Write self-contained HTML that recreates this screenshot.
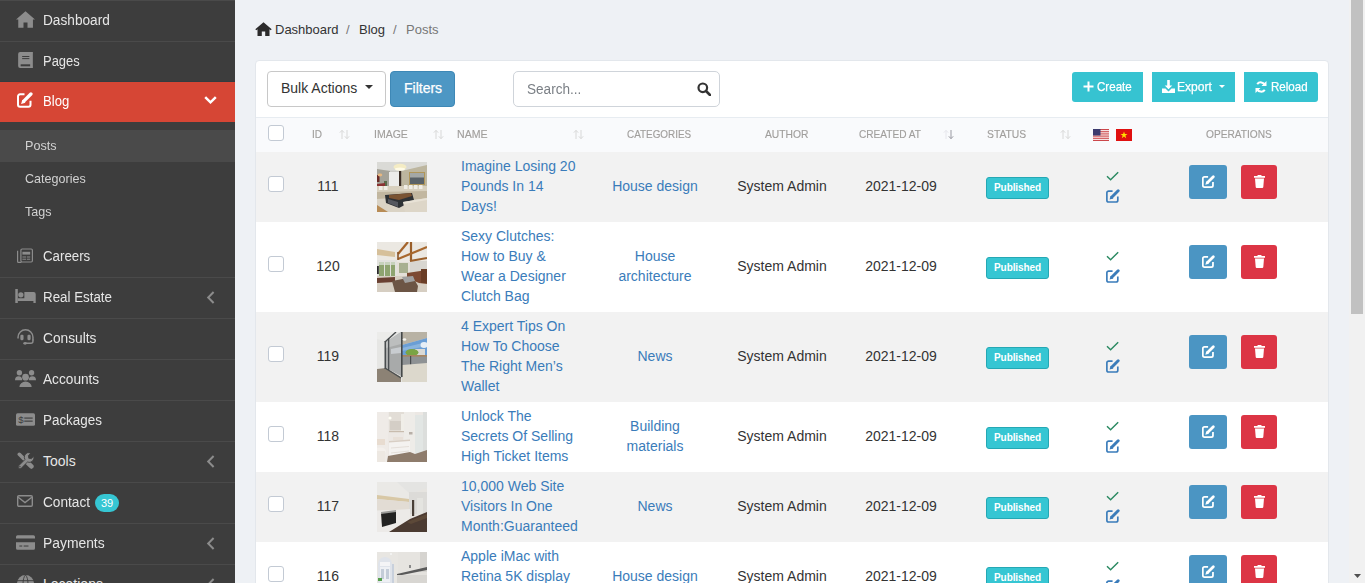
<!DOCTYPE html>
<html><head><meta charset="utf-8">
<style>
*{box-sizing:border-box;margin:0;padding:0}
html,body{width:1365px;height:583px;overflow:hidden}
body{font-family:"Liberation Sans",sans-serif;background:#eef1f5;position:relative;color:#333}
#sb{position:absolute;left:0;top:0;width:235px;height:583px;background:#3d3d3d;overflow:hidden}
.mi{position:absolute;left:0;width:235px;height:41px;border-top:1px solid #4a4a4a;color:#e6e6e6;font-size:14px}
.mi .t{position:absolute;left:43px;top:11px;line-height:16px;transform-origin:0 0;white-space:nowrap}
.mi.act{background:#d64635;border-top:1px solid #343c40;height:41px;color:#fff}
.mi.nb{border-top-color:transparent}
.mi.act .t{top:11px}
.bdg{position:absolute;left:95px;top:11px;width:24px;height:18px;border-radius:9px;background:#36c6d3;color:#fff;font-size:11px;line-height:18px;text-align:center}
.sub{position:absolute;left:0;top:122px;width:235px;height:114px;background:#3d3d3d}
.si{position:absolute;left:0;width:235px;height:32px;font-size:13px;color:#d2d2d2}
.si .t{position:absolute;left:25px;top:8px;line-height:15px;transform-origin:0 0;white-space:nowrap}
.si.on{background:#4a4a4a}
#sc{position:absolute;left:1349px;top:0;width:16px;height:583px;background:#f1f1f1}
#th{position:absolute;left:2px;top:0;width:12px;height:314px;background:#c1c1c1}
#bc{position:absolute;left:255px;top:22px;width:200px;height:15px;font-size:13px;line-height:15px}
#bc span{white-space:nowrap}
#card{position:absolute;left:255px;top:60px;width:1074px;height:540px;background:#fff;border-radius:4px;border:1px solid #e3e7ec}
.bulk{position:absolute;left:267px;top:71px;width:119px;height:36px;border:1px solid #c8c8c8;border-radius:4px;background:#fff;font-size:14px;line-height:16px;padding:8px 0 0 13px;color:#333}
.caret{position:absolute;left:97px;top:13px;width:0;height:0;border-left:4px solid transparent;border-right:4px solid transparent;border-top:4.5px solid #333}
.filt{position:absolute;left:390px;top:71px;width:65px;height:36px;border-radius:4px;background:#4d97c4;border:1px solid #3e88b6;color:#fff;font-size:14px;line-height:16px;padding:8px 0 0 13px;-webkit-text-stroke:0.25px #fff}
.srch{position:absolute;left:513px;top:71px;width:207px;height:36px;border:1px solid #cfd4da;border-radius:5px;background:#fff}
.srch .ph{position:absolute;left:13px;top:9px;font-size:14px;line-height:16px;color:#7a7f85}
.tbtn{position:absolute;top:72px;height:30px;background:#36c3d1;color:#fff;font-size:13px;line-height:15px}
#thead{position:absolute;left:256px;top:117px;width:1072px;height:35px;background:#f9fafc;border-top:1px solid #e7ecf1}
.hd{position:absolute;top:128px;font-size:11px;line-height:13px;color:#a09e9c;white-space:nowrap;transform-origin:0 0;-webkit-text-stroke:0.15px #a09e9c}
.cb{position:absolute;width:16px;height:16px;border:1px solid #c3cad4;border-radius:3px;background:#fff}
.row{position:absolute;left:256px;width:1072px}
.td{position:absolute;font-size:14px;line-height:20px;white-space:nowrap}
.nm{color:#3a7cba}
.badge{position:absolute;left:986px;width:63px;height:22px;background:#36c6d3;border:1px solid #25a8b4;border-radius:3px;color:#fff;font-size:10px;font-weight:bold;line-height:20px;text-align:center;letter-spacing:-0.1px}
.ebtn{position:absolute;left:1189px;width:38px;height:34px;border-radius:3px;background:#4b95c3}
.dbtn{position:absolute;left:1241px;width:36px;height:34px;border-radius:3px;background:#dc3545}
.img{position:absolute;left:377px;width:50px;height:50px;overflow:hidden}
.bt{position:absolute;top:7px;transform-origin:0 0;-webkit-text-stroke:0.25px #fff;white-space:nowrap}

.ph1{background:linear-gradient(#ccc8bf 0,#ccc8bf 40%,#bdb3a0 60%,#7a6a55 70%,#dcd6cc 85%)}
.ph2{background:linear-gradient(#d8cbb5 0,#b0a080 40%,#8a6a50 70%,#c8bca8 100%)}
.ph3{background:linear-gradient(90deg,#6a6a6a 0,#7a7a78 50%,#6a9ac8 60%,#b8c4c8 100%)}
.ph4{background:linear-gradient(#e8e2da 0,#ece8e2 70%,#8a7a6a 100%)}
.ph5{background:linear-gradient(#e6e4e0 0,#d8d4cc 50%,#3a3a3a 65%,#6a5a4a 100%)}
.ph6{background:linear-gradient(#e8e8e8 0,#d0ccc4 100%)}

</style></head><body>
<div id="sb">
<div class="mi" style="top:0px"><span class="t" style="transform:scaleX(0.976)">Dashboard</span></div><svg width="19" height="17" viewBox="0 0 18.5 16.2" style="position:absolute;left:15.7px;top:10.7px"><path fill="#8c8c8c" d="M9.25 0L0 8.2h2.2v8h5.1v-5.2h3.9v5.2h5.3v-8h2z"/></svg>
<div class="mi" style="top:41px"><span class="t" style="transform:scaleX(0.925)">Pages</span></div><svg width="15" height="16" viewBox="0 0 14.7 16" style="position:absolute;left:17.7px;top:51.9px"><path fill="#8c8c8c" d="M2 0h12.7v16H2a2 2 0 01-2-2V2a2 2 0 012-2z"/><rect x="4" y="4" width="7.2" height="1" fill="#3d3d3d"/><rect x="4" y="6.1" width="7.2" height="1" fill="#3d3d3d"/><rect x="2.5" y="12.3" width="9.5" height="2" fill="#3d3d3d"/></svg>
<div class="mi act" style="top:81px"><span class="t" style="transform:scaleX(0.936)">Blog</span><svg width="13" height="8" viewBox="0 0 13 8" style="position:absolute;left:204px;top:14px"><path d="M1.2 1.2L6.5 6.3l5.3-5.1" fill="none" stroke="#fff" stroke-width="2.5"/></svg></div><svg width="16" height="16" viewBox="0 0 16 15.7" style="position:absolute;left:16.9px;top:92.2px"><path fill="none" stroke="#fff" stroke-width="2" d="M7.5 2.2H3A2 2 0 001 4.2v8.5a2 2 0 002 2h8.5a2 2 0 002-2V8.5"/><path d="M6.8 9L13.9 1.9" stroke="#fff" stroke-width="3.4" stroke-linecap="round"/><path fill="#fff" d="M4.1 11.9l1.2-4.4 3.2 3.2z"/></svg>
<div class="sub"><div class="si on" style="top:8px"><span class="t" style="transform:scaleX(0.97)">Posts</span></div><div class="si" style="top:41px"><span class="t" style="transform:scaleX(0.965)">Categories</span></div><div class="si" style="top:74px"><span class="t" style="transform:scaleX(0.964)">Tags</span></div></div>
<div class="mi nb" style="top:236px"><span class="t" style="transform:scaleX(0.948)">Careers</span></div><svg width="16" height="15" viewBox="0 0 16 14.2" style="position:absolute;left:16.9px;top:247.7px"><rect x="3.9" y="0.6" width="11.5" height="13" rx="1.2" fill="none" stroke="#8c8c8c" stroke-width="1.2"/><path d="M0.6 2.3v10.7a0.9 0.9 0 00.9.9h3" fill="none" stroke="#8c8c8c" stroke-width="1.2"/><rect x="5.4" y="3.4" width="7.8" height="2.8" fill="#8c8c8c"/><rect x="5.4" y="8.1" width="3.6" height="1" fill="#8c8c8c"/><rect x="9.8" y="8.1" width="3.4" height="1" fill="#8c8c8c"/><rect x="5.4" y="10.3" width="3.6" height="1" fill="#8c8c8c"/><rect x="9.8" y="10.3" width="3.4" height="1" fill="#8c8c8c"/></svg>
<div class="mi" style="top:277px"><span class="t" style="transform:scaleX(0.953)">Real Estate</span><svg width="9" height="13" viewBox="0 0 9 13" style="position:absolute;left:206px;top:13px"><path d="M7.6 1L2.2 6.5l5.4 5.5" fill="none" stroke="#8c8c8c" stroke-width="2"/></svg></div><svg width="21" height="14" viewBox="0 0 20.3 13.9" style="position:absolute;left:14.9px;top:288.9px"><rect x="0" y="0" width="2.5" height="13.9" fill="#8c8c8c"/><circle cx="5.55" cy="5.8" r="2.6" fill="#8c8c8c"/><path fill="#8c8c8c" d="M9 3.1h9.3a2 2 0 012 2V13.9h-2.3v-2H2.5V9.3H9z"/></svg>
<div class="mi" style="top:318px"><span class="t" style="transform:scaleX(0.98)">Consults</span></div><svg width="17" height="16" viewBox="0 0 16.5 16" style="position:absolute;left:16.7px;top:328.9px"><path fill="none" stroke="#8c8c8c" stroke-width="1.5" d="M0.8 9.5V8.2a7.45 7.45 0 0114.9 0v3.3"/><rect x="3.1" y="5.8" width="3.2" height="5.4" rx="1.1" fill="#8c8c8c"/><rect x="10.2" y="5.8" width="3.2" height="5.4" rx="1.1" fill="#8c8c8c"/><path fill="none" stroke="#8c8c8c" stroke-width="1.4" d="M15.7 10.5v1.7a2 2 0 01-2 2H8"/><ellipse cx="7.8" cy="14.3" rx="1.8" ry="1.4" fill="#8c8c8c"/></svg>
<div class="mi" style="top:359px"><span class="t" style="transform:scaleX(0.976)">Accounts</span></div><svg width="21" height="17" viewBox="0 0 20.5 16.4" style="position:absolute;left:14.7px;top:369.7px"><circle cx="4.3" cy="2.6" r="2.6" fill="#8c8c8c"/><circle cx="16.2" cy="2.6" r="2.6" fill="#8c8c8c"/><circle cx="10.3" cy="6.9" r="3.3" fill="#8c8c8c"/><path fill="#8c8c8c" d="M0 9.8a3.5 3.8 0 017 0zM13.5 9.8a3.5 3.8 0 017 0zM4.3 16.4a6 5.2 0 0112 0z"/></svg>
<div class="mi" style="top:400px"><span class="t" style="transform:scaleX(0.958)">Packages</span></div><svg width="19" height="13" viewBox="0 0 18.6 12.3" style="position:absolute;left:15.8px;top:412.7px"><rect x="0" y="0" width="18.6" height="12.3" rx="1.5" fill="#8c8c8c"/><text x="2.3" y="10" font-family="Liberation Sans" font-size="9.5" fill="#3d3d3d">$</text><rect x="8.1" y="4.2" width="8.2" height="1.1" fill="#3d3d3d"/><rect x="8.1" y="7.2" width="8.2" height="1.1" fill="#3d3d3d"/></svg>
<div class="mi" style="top:441px"><span class="t" style="transform:scaleX(1.0)">Tools</span><svg width="9" height="13" viewBox="0 0 9 13" style="position:absolute;left:206px;top:13px"><path d="M7.6 1L2.2 6.5l5.4 5.5" fill="none" stroke="#8c8c8c" stroke-width="2"/></svg></div><svg width="17" height="17" viewBox="0 0 16.3 16.2" style="position:absolute;left:16.9px;top:451.9px"><path d="M2.2 2.2L6.5 6.5" stroke="#8c8c8c" stroke-width="3.4" stroke-linecap="round"/><path d="M9.8 9.8l4 4" stroke="#8c8c8c" stroke-width="4.4" stroke-linecap="round"/><path d="M8.6 7.6L11.5 4.7" stroke="#3d3d3d" stroke-width="5"/><path fill="#8c8c8c" stroke="#3d3d3d" stroke-width="0.8" d="M10.2 0.6a4.6 4.6 0 00-2.6 6.6L1.6 13.2a1.7 1.7 0 002.4 2.4l6-6a4.6 4.6 0 006.1-5.5l-2.2 2.2-2.6-.3-.4-2.6 2.2-2.2a4.6 4.6 0 00-2.9-.6z"/><circle cx="2.8" cy="14" r="0.7" fill="#3d3d3d"/></svg>
<div class="mi" style="top:482px"><span class="t" style="transform:scaleX(0.976)">Contact</span><span class="bdg">39</span></div><svg width="16" height="12" viewBox="0 0 16 12" style="position:absolute;left:16.9px;top:495px"><rect x="0.7" y="0.7" width="14.6" height="10.6" rx="1.2" fill="none" stroke="#8c8c8c" stroke-width="1.4"/><path d="M1.2 2.2L8 7.6l6.8-5.4" fill="none" stroke="#8c8c8c" stroke-width="1.4"/></svg>
<div class="mi" style="top:523px"><span class="t" style="transform:scaleX(0.99)">Payments</span><svg width="9" height="13" viewBox="0 0 9 13" style="position:absolute;left:206px;top:13px"><path d="M7.6 1L2.2 6.5l5.4 5.5" fill="none" stroke="#8c8c8c" stroke-width="2"/></svg></div><svg width="19" height="15" viewBox="0 0 18.6 14.1" style="position:absolute;left:15.7px;top:534.8px"><path fill="#8c8c8c" d="M1.5 0h15.6a1.5 1.5 0 011.5 1.5V3.2H0V1.5A1.5 1.5 0 011.5 0zM0 6.7h18.6v5.9a1.5 1.5 0 01-1.5 1.5H1.5A1.5 1.5 0 010 12.6z"/><rect x="3.3" y="10" width="2.8" height="1" fill="#3d3d3d"/><rect x="7.5" y="10" width="4.7" height="1" fill="#3d3d3d"/></svg>
<div class="mi" style="top:564px"><span class="t" style="transform:scaleX(1.0)">Locations</span><svg width="9" height="13" viewBox="0 0 9 13" style="position:absolute;left:206px;top:13px"><path d="M7.6 1L2.2 6.5l5.4 5.5" fill="none" stroke="#8c8c8c" stroke-width="2"/></svg></div><svg width="17" height="17" viewBox="0 0 16.5 16.5" style="position:absolute;left:16.6px;top:574.7px"><circle cx="8.25" cy="8.25" r="8.25" fill="#8c8c8c"/><path d="M0 5.5h16.5M0 11h16.5M8.25 0c-3.2 3-3.2 13.5 0 16.5M8.25 0c3.2 3 3.2 13.5 0 16.5" stroke="#3d3d3d" stroke-width="0.9" fill="none"/></svg>
</div>
<div id="bc"><svg width="17" height="14" viewBox="0 0 17 14" style="position:absolute;left:0;top:0px"><path fill="#2b2b2b" d="M8.5 0.3L0.3 7.2l1 1.1 1.2-1V14h4.3V9.5h3.4V14h4.3V7.3l1.2 1 1-1.1z"/></svg><span style="position:absolute;left:20px;top:0;color:#333">Dashboard</span><span style="position:absolute;left:91px;top:0;color:#777">/</span><span style="position:absolute;left:104px;top:0;color:#333">Blog</span><span style="position:absolute;left:138px;top:0;color:#777">/</span><span style="position:absolute;left:151px;top:0;color:#777">Posts</span></div>
<div id="card"></div>
<div class="bulk">Bulk Actions<span class="caret"></span></div><div class="filt">Filters</div><div class="srch"><span class="ph" style="transform:scaleX(0.97);transform-origin:0 0">Search...</span><svg width="14" height="14" viewBox="0 0 14 14" style="position:absolute;left:183px;top:10px"><circle cx="5.8" cy="5.8" r="4.3" fill="none" stroke="#333" stroke-width="2.2"/><path d="M9 9l4 4" stroke="#333" stroke-width="2.6" stroke-linecap="round"/></svg></div><div class="tbtn" style="left:1072px;width:71px;border-radius:3px 0 0 3px"><svg width="11" height="11" viewBox="0 0 11 11" style="position:absolute;left:11px;top:9px"><path d="M5.5 0.5v10M0.5 5.5h10" stroke="#fff" stroke-width="2"/></svg><span class="bt" style="left:25px;transform:scaleX(0.89)">Create</span></div><div class="tbtn" style="left:1152px;width:83px;border-radius:0"><svg width="13" height="13" viewBox="0 0 13 13" style="position:absolute;left:10px;top:8px"><path fill="#fff" d="M5.2 0h2.6v5.5h2.5L6.5 9.3 2.7 5.5h2.5z"/><path fill="#fff" d="M0 8.5h3.5l3 3 3-3H13V13H0z"/></svg><span class="bt" style="left:25.3px;transform:scaleX(0.93)">Export</span><span style="position:absolute;left:67px;top:13px;width:0;height:0;border-left:3px solid transparent;border-right:3px solid transparent;border-top:3.5px solid #fff"></span></div><div class="tbtn" style="left:1244px;width:74px;border-radius:0 3px 3px 0"><svg width="12" height="12" viewBox="0 0 12 12" style="position:absolute;left:11px;top:9px"><path d="M10 4.2A4.5 4.5 0 002.2 3.2M2 7.8a4.5 4.5 0 007.8 1" fill="none" stroke="#fff" stroke-width="2"/><path fill="#fff" d="M11.5 0v5H6.5zM0.5 12V7h5z"/></svg><span class="bt" style="left:26.5px;transform:scaleX(0.89)">Reload</span></div>
<div id="thead"></div>
<span class="cb" style="left:267.5px;top:125px"></span>
<span class="hd" style="left:312px;transform:scaleX(0.909)">ID</span>
<svg width="11" height="11" viewBox="0 0 11 11" style="position:absolute;left:339px;top:129px"><path d="M3 10V1.5M0.8 3.7L3 1.3l2.2 2.4" fill="none" stroke="#d8d8d8" stroke-width="1"/><path d="M8 1v8.5M5.8 7.3L8 9.7l2.2-2.4" fill="none" stroke="#d8d8d8" stroke-width="1"/></svg>
<span class="hd" style="left:374px;transform:scaleX(0.954)">IMAGE</span>
<svg width="11" height="11" viewBox="0 0 11 11" style="position:absolute;left:433px;top:129px"><path d="M3 10V1.5M0.8 3.7L3 1.3l2.2 2.4" fill="none" stroke="#d8d8d8" stroke-width="1"/><path d="M8 1v8.5M5.8 7.3L8 9.7l2.2-2.4" fill="none" stroke="#d8d8d8" stroke-width="1"/></svg>
<span class="hd" style="left:457px;transform:scaleX(0.963)">NAME</span>
<svg width="11" height="11" viewBox="0 0 11 11" style="position:absolute;left:573px;top:129px"><path d="M3 10V1.5M0.8 3.7L3 1.3l2.2 2.4" fill="none" stroke="#d8d8d8" stroke-width="1"/><path d="M8 1v8.5M5.8 7.3L8 9.7l2.2-2.4" fill="none" stroke="#d8d8d8" stroke-width="1"/></svg>
<span class="hd" style="left:627px;transform:scaleX(0.899)">CATEGORIES</span>
<span class="hd" style="left:765px;transform:scaleX(0.935)">AUTHOR</span>
<span class="hd" style="left:859px;transform:scaleX(0.918)">CREATED AT</span>
<svg width="11" height="11" viewBox="0 0 11 11" style="position:absolute;left:943px;top:129px"><path d="M3 10V1.5M0.8 3.7L3 1.3l2.2 2.4" fill="none" stroke="#e6e6ec" stroke-width="1"/><path d="M8 1v8.5M5.8 7.3L8 9.7l2.2-2.4" fill="none" stroke="#9a9aa2" stroke-width="1"/></svg>
<span class="hd" style="left:987px;transform:scaleX(0.938)">STATUS</span>
<svg width="11" height="11" viewBox="0 0 11 11" style="position:absolute;left:1060px;top:129px"><path d="M3 10V1.5M0.8 3.7L3 1.3l2.2 2.4" fill="none" stroke="#d8d8d8" stroke-width="1"/><path d="M8 1v8.5M5.8 7.3L8 9.7l2.2-2.4" fill="none" stroke="#d8d8d8" stroke-width="1"/></svg>
<svg width="16" height="12" viewBox="0 0 16 12" style="position:absolute;left:1093px;top:129px"><rect width="16" height="12" fill="#fff"/><rect y="0.00" width="16" height="0.92" fill="#c8383c"/><rect y="1.85" width="16" height="0.92" fill="#c8383c"/><rect y="3.69" width="16" height="0.92" fill="#c8383c"/><rect y="5.54" width="16" height="0.92" fill="#c8383c"/><rect y="7.38" width="16" height="0.92" fill="#c8383c"/><rect y="9.23" width="16" height="0.92" fill="#c8383c"/><rect y="11.08" width="16" height="0.92" fill="#c8383c"/><rect width="7.5" height="6.5" fill="#3c3b6e"/></svg>
<svg width="16" height="12" viewBox="0 0 16 12" style="position:absolute;left:1116px;top:129px"><rect width="16" height="12" fill="#e01010"/><path fill="#ffde00" d="M8 2.5l.9 2.5h2.6l-2.1 1.6.8 2.6L8 7.6 5.8 9.2l.8-2.6L4.5 5h2.6z"/></svg>
<span class="hd" style="left:1206px;transform:scaleX(0.924)">OPERATIONS</span>
<div class="row" style="top:152px;height:70px;background:#f2f2f2"></div>
<span class="cb" style="left:267.5px;top:176px"></span>
<span class="td" style="left:300px;width:56px;text-align:center;top:176.0px;color:#333">111</span>
<svg class="img" width="50" height="50" viewBox="0 0 50 50" style="top:162px"><defs><filter id="b1" x="0" y="0" width="1" height="1"><feGaussianBlur stdDeviation="0.7" edgeMode="duplicate"/></filter><clipPath id="c1"><rect width="50" height="50"/></clipPath></defs><g clip-path="url(#c1)"><g filter="url(#b1)">
<rect width="50" height="50" fill="#cfcabe"/>
<rect x="0" y="0" width="50" height="12" fill="#cdcdc8"/>
<polygon points="0,0 50,0 50,4 26,9 0,8" fill="#dadad6"/>
<polygon points="0,7 13,9 13,27 0,27" fill="#a4a298"/>
<rect x="0" y="13" width="2.5" height="7" fill="#6a2a26"/>
<ellipse cx="3" cy="13" rx="2.3" ry="1.4" fill="#e8b880"/>
<rect x="7" y="19" width="3" height="6" fill="#5a6a48"/>
<polygon points="0,22 8,21 8,26 0,27" fill="#8a3030"/>
<rect x="12" y="10" width="10" height="16" fill="#ececea"/>
<rect x="22" y="9" width="2.5" height="17" fill="#3a2e26"/>
<polygon points="24.5,9 50,3 50,26 24.5,26" fill="#bdb69f"/>
<rect x="32" y="10" width="16" height="13" fill="#b0965a"/>
<rect x="33" y="11" width="14" height="11" fill="#5a6268"/>
<rect x="33" y="11" width="14" height="4.5" fill="#a4a8a6"/>
<ellipse cx="23" cy="5" rx="6.5" ry="3.3" fill="#f4ecc4"/>
<ellipse cx="23" cy="7" rx="5" ry="1.5" fill="#fffbe6"/>
<rect x="0" y="24" width="50" height="8" fill="#d8d0be"/>
<rect x="2" y="24" width="3.5" height="4" fill="#f0ede6"/><rect x="7" y="24" width="3.5" height="4" fill="#f0ede6"/>
<rect x="27" y="23" width="3.5" height="4" fill="#f0ede6"/><rect x="32" y="23" width="3.5" height="4" fill="#f0ede6"/><rect x="37" y="23" width="3.5" height="4" fill="#f0ede6"/><rect x="42" y="23" width="3.5" height="4" fill="#f0ede6"/>
<polygon points="0,30 50,29 50,37 0,38" fill="#c2b7a0"/>
<polygon points="0,37 30,35 30,50 0,50" fill="#dad3c5"/>
<polygon points="0,43 11,50 0,50" fill="#b88c56"/>
<polygon points="8,33 35,31 37,38 22,46 9,41" fill="#2e3036"/>
<polygon points="12,33 34,31 35,34 22,38 12,36" fill="#7a5230"/>
<polygon points="11,37 21,40 21,45 11,41" fill="#55585e"/>
<polygon points="26,40 50,36 50,50 28,50" fill="#ddd6c8"/>
<polygon points="26,40 50,36 50,38 27,42" fill="#e8e2d6"/>
</g></g></svg>
<span class="td nm" style="left:461px;top:156.0px">Imagine Losing 20<br>Pounds In 14<br>Days!</span>
<span class="td nm" style="left:595px;width:120px;text-align:center;top:176.0px">House design</span>
<span class="td" style="left:722px;width:120px;text-align:center;top:176.0px;color:#333">System Admin</span>
<span class="td" style="left:851px;width:100px;text-align:center;top:176.0px;color:#333">2021-12-09</span>
<span class="badge" style="top:177px">Published</span>
<svg width="13" height="10" viewBox="0 0 13 10" style="position:absolute;left:1106px;top:171px"><path d="M1 5.2l3.6 3.6L12.2 1.2" fill="none" stroke="#2b8a62" stroke-width="1.45"/></svg>
<svg width="14" height="14" viewBox="0 0 16 15.7" style="position:absolute;left:1105.5px;top:189px"><path fill="none" stroke="#3a7cba" stroke-width="1.9" d="M7.5 2.2H3A2 2 0 001 4.2v8.5a2 2 0 002 2h8.5a2 2 0 002-2V8.5"/><path d="M6.8 9L13.9 1.9" stroke="#3a7cba" stroke-width="3.4" stroke-linecap="round"/><path fill="#3a7cba" d="M4.1 11.9l1.2-4.4 3.2 3.2z"/></svg>
<div class="ebtn" style="top:165px"><svg width="13" height="13" viewBox="0 0 16 15.7" style="position:absolute;left:12.8px;top:10px"><path fill="none" stroke="#fff" stroke-width="2.2" d="M7.5 2.2H3A2 2 0 001 4.2v8.5a2 2 0 002 2h8.5a2 2 0 002-2V8.5"/><path d="M6.8 9L13.9 1.9" stroke="#fff" stroke-width="3.4" stroke-linecap="round"/><path fill="#fff" d="M4.1 11.9l1.2-4.4 3.2 3.2z"/></svg></div>
<div class="dbtn" style="top:165px"><svg width="11" height="13" viewBox="0 0 11 13" style="position:absolute;left:12.5px;top:10px"><path fill="#fff" d="M3.8 0h3.4l.5.9H10.6a.5.5 0 01.5.5v1.3H-.1V1.4a.5.5 0 01.5-.5H3.3zM1 3.4h9l-.7 8.7a1 1 0 01-1 .9H2.7a1 1 0 01-1-.9z"/></svg></div>
<div class="row" style="top:222px;height:90px;background:#fff"></div>
<span class="cb" style="left:267.5px;top:256px"></span>
<span class="td" style="left:300px;width:56px;text-align:center;top:256.0px;color:#333">120</span>
<svg class="img" width="50" height="50" viewBox="0 0 50 50" style="top:242px"><defs><filter id="b2" x="0" y="0" width="1" height="1"><feGaussianBlur stdDeviation="0.7" edgeMode="duplicate"/></filter><clipPath id="c2"><rect width="50" height="50"/></clipPath></defs><g clip-path="url(#c2)"><g filter="url(#b2)">
<rect width="50" height="50" fill="#e4e0d8"/>
<rect x="0" y="0" width="50" height="20" fill="#ebe8e2"/>
<polygon points="0,7 18,10 18,15 0,13" fill="#d6c09a"/>
<rect x="0" y="18" width="20" height="18" fill="#e2e2de"/>
<rect x="2" y="20" width="16" height="14" fill="#8ea470"/>
<rect x="2" y="20" width="16" height="3" fill="#c6d2bc"/>
<rect x="7" y="20" width="1" height="14" fill="#e0e0dc"/><rect x="13" y="20" width="1" height="14" fill="#e0e0dc"/>
<rect x="0" y="24" width="1.8" height="8" fill="#2a2a2a"/>
<rect x="22" y="21" width="9" height="10" fill="#a8b090"/>
<rect x="33" y="19" width="17" height="12" fill="#d8d6d0"/>
<line x1="21" y1="12" x2="31" y2="0" stroke="#a4642c" stroke-width="2.2"/>
<line x1="34" y1="0" x2="34" y2="19" stroke="#9a5e2a" stroke-width="2.2"/>
<line x1="21" y1="17" x2="50" y2="5" stroke="#a8682e" stroke-width="2.2"/>
<line x1="33" y1="19" x2="50" y2="16" stroke="#9a5e2a" stroke-width="1.8"/>
<line x1="21" y1="10" x2="21" y2="18" stroke="#8a5428" stroke-width="1.6"/>
<rect x="0" y="34" width="50" height="16" fill="#d6cec2"/>
<polygon points="0,36 18,35 18,40 0,41" fill="#6a4030"/>
<polygon points="30,31 50,28 50,42 42,41 30,36" fill="#7c4a30"/>
<rect x="44" y="27" width="6" height="14" fill="#6a3c28"/>
<polygon points="15,39 36,35 41,44 40,50 18,50" fill="#6c5444"/>
<polygon points="25,35 36,34 38,39 28,41" fill="#a0a0a0"/>
</g></g></svg>
<span class="td nm" style="left:461px;top:226.0px">Sexy Clutches:<br>How to Buy &amp;<br>Wear a Designer<br>Clutch Bag</span>
<span class="td nm" style="left:595px;width:120px;text-align:center;top:246.0px">House<br>architecture</span>
<span class="td" style="left:722px;width:120px;text-align:center;top:256.0px;color:#333">System Admin</span>
<span class="td" style="left:851px;width:100px;text-align:center;top:256.0px;color:#333">2021-12-09</span>
<span class="badge" style="top:257px">Published</span>
<svg width="13" height="10" viewBox="0 0 13 10" style="position:absolute;left:1106px;top:251px"><path d="M1 5.2l3.6 3.6L12.2 1.2" fill="none" stroke="#2b8a62" stroke-width="1.45"/></svg>
<svg width="14" height="14" viewBox="0 0 16 15.7" style="position:absolute;left:1105.5px;top:269px"><path fill="none" stroke="#3a7cba" stroke-width="1.9" d="M7.5 2.2H3A2 2 0 001 4.2v8.5a2 2 0 002 2h8.5a2 2 0 002-2V8.5"/><path d="M6.8 9L13.9 1.9" stroke="#3a7cba" stroke-width="3.4" stroke-linecap="round"/><path fill="#3a7cba" d="M4.1 11.9l1.2-4.4 3.2 3.2z"/></svg>
<div class="ebtn" style="top:245px"><svg width="13" height="13" viewBox="0 0 16 15.7" style="position:absolute;left:12.8px;top:10px"><path fill="none" stroke="#fff" stroke-width="2.2" d="M7.5 2.2H3A2 2 0 001 4.2v8.5a2 2 0 002 2h8.5a2 2 0 002-2V8.5"/><path d="M6.8 9L13.9 1.9" stroke="#fff" stroke-width="3.4" stroke-linecap="round"/><path fill="#fff" d="M4.1 11.9l1.2-4.4 3.2 3.2z"/></svg></div>
<div class="dbtn" style="top:245px"><svg width="11" height="13" viewBox="0 0 11 13" style="position:absolute;left:12.5px;top:10px"><path fill="#fff" d="M3.8 0h3.4l.5.9H10.6a.5.5 0 01.5.5v1.3H-.1V1.4a.5.5 0 01.5-.5H3.3zM1 3.4h9l-.7 8.7a1 1 0 01-1 .9H2.7a1 1 0 01-1-.9z"/></svg></div>
<div class="row" style="top:312px;height:90px;background:#f2f2f2"></div>
<span class="cb" style="left:267.5px;top:346px"></span>
<span class="td" style="left:300px;width:56px;text-align:center;top:346.0px;color:#333">119</span>
<svg class="img" width="50" height="50" viewBox="0 0 50 50" style="top:332px"><defs><filter id="b3" x="0" y="0" width="1" height="1"><feGaussianBlur stdDeviation="0.7" edgeMode="duplicate"/></filter><clipPath id="c3"><rect width="50" height="50"/></clipPath></defs><g clip-path="url(#c3)"><g filter="url(#b3)">
<rect width="50" height="50" fill="#d6d2c6"/>
<rect x="0" y="0" width="25" height="50" fill="#e6e6e4"/>
<polygon points="0,0 18,0 8,9 0,7" fill="#ececea"/>
<polygon points="9,10 24,0 24,44 9,36" fill="#a8aaaa"/>
<polygon points="9,10 24,0 24,12 9,16" fill="#bcbebe"/><polygon points="14,17 24,15 24,21 14,22" fill="#c8ccd0"/>
<polygon points="25,0 50,0 50,6 25,13" fill="#b8b2a4"/>
<polygon points="25,13 50,6 50,23 25,23" fill="#6a9ed6"/>
<polygon points="25,16 50,10 50,14 25,19" fill="#8ab4de"/>
<ellipse cx="47" cy="13" rx="3.5" ry="3" fill="#e6eef6"/>
<rect x="38" y="17" width="10" height="6" fill="#dadad6"/>
<ellipse cx="35" cy="20.5" rx="6.5" ry="3.5" fill="#7aa444"/>
<rect x="25" y="23" width="25" height="10" fill="#8e9294"/>
<rect x="25" y="23" width="25" height="1.6" fill="#a8845e"/>
<rect x="33" y="24" width="1.2" height="10" fill="#4a4e50"/>
<polygon points="25,33 50,31 50,50 25,50" fill="#dcd8cc"/>
<polygon points="0,37 9,36 24,45 24,50 0,50" fill="#8c8274"/>
<rect x="7.5" y="9" width="1.5" height="28" fill="#4a4e50"/>
<rect x="11" y="6" width="1.3" height="32" fill="#4c5052"/>
<rect x="24" y="0" width="1.6" height="45" fill="#44484a"/>
<line x1="8" y1="10" x2="19" y2="0" stroke="#4a4e50" stroke-width="1.4"/>
<line x1="8" y1="36" x2="24" y2="46" stroke="#4a4e50" stroke-width="1.2"/>
<ellipse cx="27.5" cy="7.5" rx="1.8" ry="1.2" fill="#f4f4f0"/>
</g></g></svg>
<span class="td nm" style="left:461px;top:316.0px">4 Expert Tips On<br>How To Choose<br>The Right Men’s<br>Wallet</span>
<span class="td nm" style="left:595px;width:120px;text-align:center;top:346.0px">News</span>
<span class="td" style="left:722px;width:120px;text-align:center;top:346.0px;color:#333">System Admin</span>
<span class="td" style="left:851px;width:100px;text-align:center;top:346.0px;color:#333">2021-12-09</span>
<span class="badge" style="top:347px">Published</span>
<svg width="13" height="10" viewBox="0 0 13 10" style="position:absolute;left:1106px;top:341px"><path d="M1 5.2l3.6 3.6L12.2 1.2" fill="none" stroke="#2b8a62" stroke-width="1.45"/></svg>
<svg width="14" height="14" viewBox="0 0 16 15.7" style="position:absolute;left:1105.5px;top:359px"><path fill="none" stroke="#3a7cba" stroke-width="1.9" d="M7.5 2.2H3A2 2 0 001 4.2v8.5a2 2 0 002 2h8.5a2 2 0 002-2V8.5"/><path d="M6.8 9L13.9 1.9" stroke="#3a7cba" stroke-width="3.4" stroke-linecap="round"/><path fill="#3a7cba" d="M4.1 11.9l1.2-4.4 3.2 3.2z"/></svg>
<div class="ebtn" style="top:335px"><svg width="13" height="13" viewBox="0 0 16 15.7" style="position:absolute;left:12.8px;top:10px"><path fill="none" stroke="#fff" stroke-width="2.2" d="M7.5 2.2H3A2 2 0 001 4.2v8.5a2 2 0 002 2h8.5a2 2 0 002-2V8.5"/><path d="M6.8 9L13.9 1.9" stroke="#fff" stroke-width="3.4" stroke-linecap="round"/><path fill="#fff" d="M4.1 11.9l1.2-4.4 3.2 3.2z"/></svg></div>
<div class="dbtn" style="top:335px"><svg width="11" height="13" viewBox="0 0 11 13" style="position:absolute;left:12.5px;top:10px"><path fill="#fff" d="M3.8 0h3.4l.5.9H10.6a.5.5 0 01.5.5v1.3H-.1V1.4a.5.5 0 01.5-.5H3.3zM1 3.4h9l-.7 8.7a1 1 0 01-1 .9H2.7a1 1 0 01-1-.9z"/></svg></div>
<div class="row" style="top:402px;height:70px;background:#fff"></div>
<span class="cb" style="left:267.5px;top:426px"></span>
<span class="td" style="left:300px;width:56px;text-align:center;top:426.0px;color:#333">118</span>
<svg class="img" width="50" height="50" viewBox="0 0 50 50" style="top:412px"><defs><filter id="b4" x="0" y="0" width="1" height="1"><feGaussianBlur stdDeviation="0.7" edgeMode="duplicate"/></filter><clipPath id="c4"><rect width="50" height="50"/></clipPath></defs><g clip-path="url(#c4)"><g filter="url(#b4)">
<rect width="50" height="50" fill="#ece8e4"/>
<rect x="0" y="0" width="11" height="50" fill="#efebe7"/>
<rect x="12" y="0" width="15" height="20" fill="#e2ddd6"/>
<rect x="13" y="9" width="11" height="9" fill="#d4cec6"/>
<circle cx="13" cy="6" r="1.6" fill="#fffef6"/>
<rect x="24" y="2" width="3" height="18" fill="#f0eee8"/>
<rect x="12" y="19" width="16" height="1.2" fill="#c8bcae"/>
<rect x="27" y="0" width="11" height="42" fill="#eeece8"/>
<rect x="32" y="20" width="3.5" height="2.5" fill="#b8b0a8"/>
<rect x="38" y="3" width="8" height="40" fill="#e2e6e4"/>
<rect x="46" y="0" width="4" height="40" fill="#dcdedc"/>
<rect x="16" y="25" width="10" height="3" fill="#e8e0d8"/>
<polygon points="12,30 33,28 33,40 16,48 12,46" fill="#f4f2f0"/>
<polygon points="12,29 33,27.5 33,29 12,30.5" fill="#d8cec4"/>
<line x1="14" y1="36" x2="32" y2="34.5" stroke="#dcd6ce" stroke-width="0.7"/>
<line x1="14" y1="41" x2="32" y2="39" stroke="#dcd6ce" stroke-width="0.7"/>
<polygon points="11,44 33,40 38,42 50,38 50,50 10,50" fill="#8e7c6c"/>
<rect x="0" y="27" width="8" height="6" fill="#e8dcd0"/>
<ellipse cx="3" cy="39" rx="6" ry="3.5" fill="#f4f0ec"/>
<rect x="0" y="39" width="8" height="11" fill="#ede8e2"/>
</g></g></svg>
<span class="td nm" style="left:461px;top:406.0px">Unlock The<br>Secrets Of Selling<br>High Ticket Items</span>
<span class="td nm" style="left:595px;width:120px;text-align:center;top:416.0px">Building<br>materials</span>
<span class="td" style="left:722px;width:120px;text-align:center;top:426.0px;color:#333">System Admin</span>
<span class="td" style="left:851px;width:100px;text-align:center;top:426.0px;color:#333">2021-12-09</span>
<span class="badge" style="top:427px">Published</span>
<svg width="13" height="10" viewBox="0 0 13 10" style="position:absolute;left:1106px;top:421px"><path d="M1 5.2l3.6 3.6L12.2 1.2" fill="none" stroke="#2b8a62" stroke-width="1.45"/></svg>
<svg width="14" height="14" viewBox="0 0 16 15.7" style="position:absolute;left:1105.5px;top:439px"><path fill="none" stroke="#3a7cba" stroke-width="1.9" d="M7.5 2.2H3A2 2 0 001 4.2v8.5a2 2 0 002 2h8.5a2 2 0 002-2V8.5"/><path d="M6.8 9L13.9 1.9" stroke="#3a7cba" stroke-width="3.4" stroke-linecap="round"/><path fill="#3a7cba" d="M4.1 11.9l1.2-4.4 3.2 3.2z"/></svg>
<div class="ebtn" style="top:415px"><svg width="13" height="13" viewBox="0 0 16 15.7" style="position:absolute;left:12.8px;top:10px"><path fill="none" stroke="#fff" stroke-width="2.2" d="M7.5 2.2H3A2 2 0 001 4.2v8.5a2 2 0 002 2h8.5a2 2 0 002-2V8.5"/><path d="M6.8 9L13.9 1.9" stroke="#fff" stroke-width="3.4" stroke-linecap="round"/><path fill="#fff" d="M4.1 11.9l1.2-4.4 3.2 3.2z"/></svg></div>
<div class="dbtn" style="top:415px"><svg width="11" height="13" viewBox="0 0 11 13" style="position:absolute;left:12.5px;top:10px"><path fill="#fff" d="M3.8 0h3.4l.5.9H10.6a.5.5 0 01.5.5v1.3H-.1V1.4a.5.5 0 01.5-.5H3.3zM1 3.4h9l-.7 8.7a1 1 0 01-1 .9H2.7a1 1 0 01-1-.9z"/></svg></div>
<div class="row" style="top:472px;height:70px;background:#f2f2f2"></div>
<span class="cb" style="left:267.5px;top:496px"></span>
<span class="td" style="left:300px;width:56px;text-align:center;top:496.0px;color:#333">117</span>
<svg class="img" width="50" height="50" viewBox="0 0 50 50" style="top:482px"><defs><filter id="b5" x="0" y="0" width="1" height="1"><feGaussianBlur stdDeviation="0.7" edgeMode="duplicate"/></filter><clipPath id="c5"><rect width="50" height="50"/></clipPath></defs><g clip-path="url(#c5)"><g filter="url(#b5)">
<rect width="50" height="50" fill="#e6e4e0"/>
<polygon points="0,0 32,0 32,20 0,14" fill="#eae9e6"/>
<polygon points="20,0 50,0 50,6 33,12" fill="#e4e4e2"/>
<polygon points="0,13 32,17 32,20 0,17" fill="#d8c8a6"/>
<polygon points="0,17 32,20 32,28 0,28" fill="#e2dcd4"/>
<rect x="32" y="10" width="18" height="22" fill="#dcdbd8"/>
<rect x="35" y="18" width="2.2" height="16" fill="#4a4038"/>
<rect x="40" y="16" width="6" height="16" fill="#e4e4e0"/>
<polygon points="0,29 33,27 33,40 12,50 0,50" fill="#eceae8"/>
<polygon points="4,31 19,29 19,41 5,45" fill="#222222"/>
<polygon points="4,30 19,28 19,30 4,32" fill="#9a9a98"/>
<polygon points="12,50 33,37 50,30 50,50" fill="#4c3a30"/>
<polygon points="30,40 50,32 50,36 34,42" fill="#5c4838"/>
</g></g></svg>
<span class="td nm" style="left:461px;top:476.0px">10,000 Web Site<br>Visitors In One<br>Month:Guaranteed</span>
<span class="td nm" style="left:595px;width:120px;text-align:center;top:496.0px">News</span>
<span class="td" style="left:722px;width:120px;text-align:center;top:496.0px;color:#333">System Admin</span>
<span class="td" style="left:851px;width:100px;text-align:center;top:496.0px;color:#333">2021-12-09</span>
<span class="badge" style="top:497px">Published</span>
<svg width="13" height="10" viewBox="0 0 13 10" style="position:absolute;left:1106px;top:491px"><path d="M1 5.2l3.6 3.6L12.2 1.2" fill="none" stroke="#2b8a62" stroke-width="1.45"/></svg>
<svg width="14" height="14" viewBox="0 0 16 15.7" style="position:absolute;left:1105.5px;top:509px"><path fill="none" stroke="#3a7cba" stroke-width="1.9" d="M7.5 2.2H3A2 2 0 001 4.2v8.5a2 2 0 002 2h8.5a2 2 0 002-2V8.5"/><path d="M6.8 9L13.9 1.9" stroke="#3a7cba" stroke-width="3.4" stroke-linecap="round"/><path fill="#3a7cba" d="M4.1 11.9l1.2-4.4 3.2 3.2z"/></svg>
<div class="ebtn" style="top:485px"><svg width="13" height="13" viewBox="0 0 16 15.7" style="position:absolute;left:12.8px;top:10px"><path fill="none" stroke="#fff" stroke-width="2.2" d="M7.5 2.2H3A2 2 0 001 4.2v8.5a2 2 0 002 2h8.5a2 2 0 002-2V8.5"/><path d="M6.8 9L13.9 1.9" stroke="#fff" stroke-width="3.4" stroke-linecap="round"/><path fill="#fff" d="M4.1 11.9l1.2-4.4 3.2 3.2z"/></svg></div>
<div class="dbtn" style="top:485px"><svg width="11" height="13" viewBox="0 0 11 13" style="position:absolute;left:12.5px;top:10px"><path fill="#fff" d="M3.8 0h3.4l.5.9H10.6a.5.5 0 01.5.5v1.3H-.1V1.4a.5.5 0 01.5-.5H3.3zM1 3.4h9l-.7 8.7a1 1 0 01-1 .9H2.7a1 1 0 01-1-.9z"/></svg></div>
<div class="row" style="top:542px;height:70px;background:#fff"></div>
<span class="cb" style="left:267.5px;top:566px"></span>
<span class="td" style="left:300px;width:56px;text-align:center;top:566.0px;color:#333">116</span>
<svg class="img" width="50" height="50" viewBox="0 0 50 50" style="top:552px"><defs><filter id="b6" x="0" y="0" width="1" height="1"><feGaussianBlur stdDeviation="0.7" edgeMode="duplicate"/></filter><clipPath id="c6"><rect width="50" height="50"/></clipPath></defs><g clip-path="url(#c6)"><g filter="url(#b6)">
<rect width="50" height="50" fill="#e4e2de"/>
<rect x="0" y="0" width="21" height="50" fill="#e8e6e2"/>
<path d="M1 31V12a7 7 0 0114 0v19z" fill="#dfe3ea"/>
<rect x="3" y="10" width="10" height="4" fill="#f4f4f6"/>
<rect x="3" y="15" width="10" height="15" fill="#eef0f4"/>
<rect x="4" y="17" width="3" height="10" fill="#c4ccd8"/><rect x="9" y="17" width="3" height="10" fill="#c4ccd8"/>
<rect x="15" y="12" width="2" height="19" fill="#c8d0dc"/>
<rect x="21" y="0" width="29" height="20" fill="#e6e4e0"/>
<rect x="43" y="0" width="7" height="20" fill="#d6d4d0"/>
<polygon points="20,22 50,15 50,18 20,24" fill="#5a5a5a"/>
<rect x="20" y="23" width="30" height="10" fill="#d8d6d2"/>
<rect x="32" y="13" width="2" height="3" fill="#8a8a8a"/>
<circle cx="14" cy="2" r="1" fill="#f6f6f6"/>
<rect x="1" y="26" width="4" height="3" fill="#58a050"/>
</g></g></svg>
<span class="td nm" style="left:461px;top:546.0px">Apple iMac with<br>Retina 5K display<br>Review</span>
<span class="td nm" style="left:595px;width:120px;text-align:center;top:566.0px">House design</span>
<span class="td" style="left:722px;width:120px;text-align:center;top:566.0px;color:#333">System Admin</span>
<span class="td" style="left:851px;width:100px;text-align:center;top:566.0px;color:#333">2021-12-09</span>
<span class="badge" style="top:567px">Published</span>
<svg width="13" height="10" viewBox="0 0 13 10" style="position:absolute;left:1106px;top:561px"><path d="M1 5.2l3.6 3.6L12.2 1.2" fill="none" stroke="#2b8a62" stroke-width="1.45"/></svg>
<svg width="14" height="14" viewBox="0 0 16 15.7" style="position:absolute;left:1105.5px;top:579px"><path fill="none" stroke="#3a7cba" stroke-width="1.9" d="M7.5 2.2H3A2 2 0 001 4.2v8.5a2 2 0 002 2h8.5a2 2 0 002-2V8.5"/><path d="M6.8 9L13.9 1.9" stroke="#3a7cba" stroke-width="3.4" stroke-linecap="round"/><path fill="#3a7cba" d="M4.1 11.9l1.2-4.4 3.2 3.2z"/></svg>
<div class="ebtn" style="top:555px"><svg width="13" height="13" viewBox="0 0 16 15.7" style="position:absolute;left:12.8px;top:10px"><path fill="none" stroke="#fff" stroke-width="2.2" d="M7.5 2.2H3A2 2 0 001 4.2v8.5a2 2 0 002 2h8.5a2 2 0 002-2V8.5"/><path d="M6.8 9L13.9 1.9" stroke="#fff" stroke-width="3.4" stroke-linecap="round"/><path fill="#fff" d="M4.1 11.9l1.2-4.4 3.2 3.2z"/></svg></div>
<div class="dbtn" style="top:555px"><svg width="11" height="13" viewBox="0 0 11 13" style="position:absolute;left:12.5px;top:10px"><path fill="#fff" d="M3.8 0h3.4l.5.9H10.6a.5.5 0 01.5.5v1.3H-.1V1.4a.5.5 0 01.5-.5H3.3zM1 3.4h9l-.7 8.7a1 1 0 01-1 .9H2.7a1 1 0 01-1-.9z"/></svg></div>
<div id="sc"><div id="th"></div><svg width="7" height="4" viewBox="0 0 7 4" style="position:absolute;left:4.8px;top:574px"><path d="M0 0h7L3.5 4z" fill="#505050"/></svg></div>
</body></html>
